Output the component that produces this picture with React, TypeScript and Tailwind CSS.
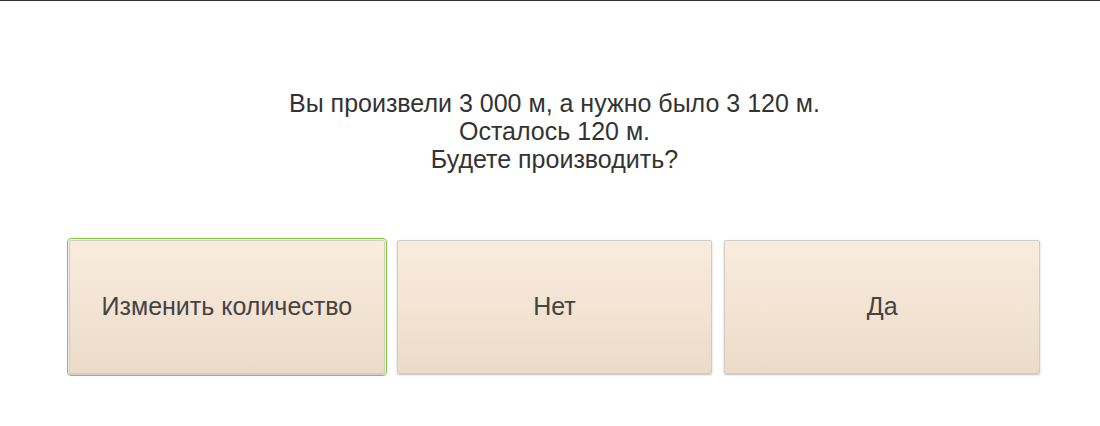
export default function App() {
  const buttons = ["Изменить количество", "Нет", "Да"];
  return (
    <div
      className="w-[1100px] h-[426px] bg-white border-t border-[#333333] flex flex-col pl-[69px] pr-[60px]"
      style={{ fontFamily: '"Liberation Sans", Arial, sans-serif' }}
    >
      <div className="pt-[88px] text-center text-[25px] leading-[28px] text-[#333333]">
        <div>Вы произвели 3 000 м, а нужно было 3 120 м.</div>
        <div>Осталось 120 м.</div>
        <div>Будете производить?</div>
      </div>
      <div className="mt-[67px] grid grid-cols-3 gap-[12px]">
        {buttons.map((label, i) => (
          <div
            key={label}
            className={
              i === 0
                ? "outline outline-1 outline-[#7fcc3a] outline-offset-[1px] rounded-[2px]"
                : "rounded-[2px]"
            }
          >
            <button className="w-full h-[134px] flex items-center justify-center rounded-[2px] border border-[#d2ccc6] bg-gradient-to-b from-[#f9ecde] to-[#ecdbc9] shadow-[0_1px_2px_rgba(0,0,0,0.25)] text-[25px] text-[#444444]">
              {label}
            </button>
          </div>
        ))}
      </div>
    </div>
  );
}
